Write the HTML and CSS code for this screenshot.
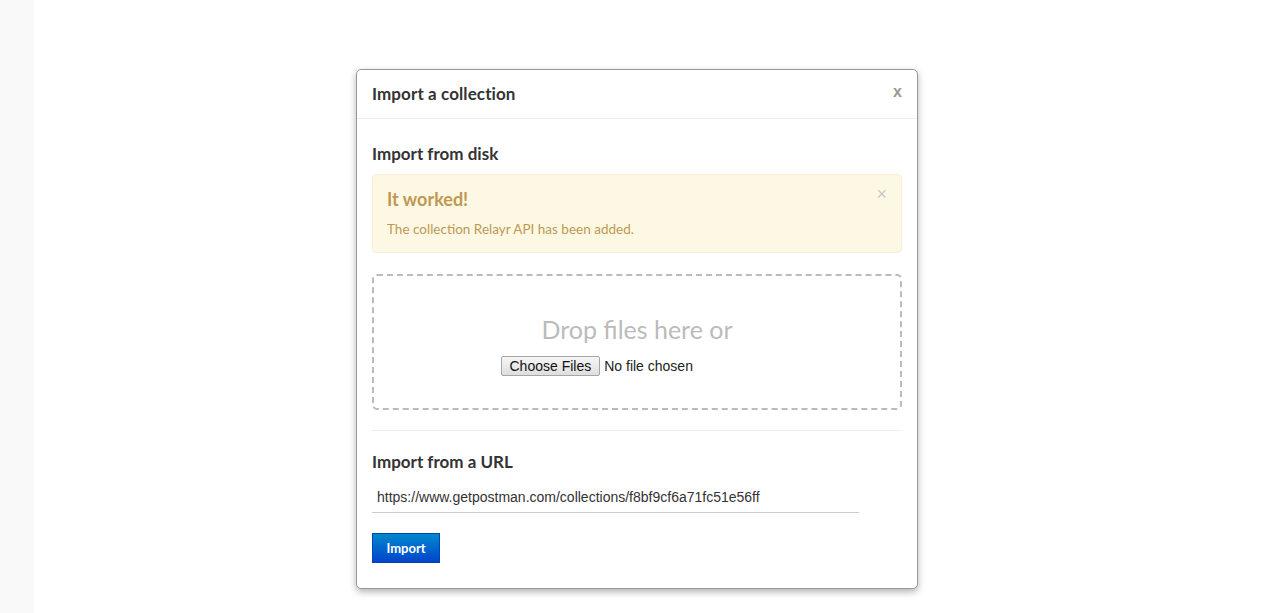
FILE: index.html
```html
<!DOCTYPE html>
<html>
<head>
<meta charset="utf-8">
<link rel="stylesheet" href="styles.css">
</head>
<body>
<div class="page">
  <aside class="sidebar"></aside>
  <main class="stage">
    <div class="modal">
      <div class="modal-header">
        <h3 class="modal-title">Import a collection</h3>
        <span class="modal-close">x</span>
      </div>
      <div class="modal-body">
        <h4 class="section-title">Import from disk</h4>
        <div class="alert">
          <span class="alert-close">×</span>
          <h4 class="alert-title">It worked!</h4>
          <p class="alert-text">The collection Relayr API has been added.</p>
        </div>
        <div class="dropzone">
          <div class="drop-text">Drop files here or</div>
          <input class="file-input" type="file" multiple>
        </div>
        <hr class="divider">
        <h4 class="section-title">Import from a URL</h4>
        <input class="url-input" type="text" value="https://www.getpostman.com/collections/f8bf9cf6a71fc51e56ff">
        <div class="actions">
          <button class="btn-import">Import</button>
        </div>
      </div>
    </div>
  </main>
</div>
</body>
</html>
```
FILE: styles.css
```css
* { box-sizing: border-box; }
html, body { margin: 0; padding: 0; height: 100%; }
body {
  background: #fff;
  font-family: "Lato", "Liberation Sans", sans-serif;
  color: #333;
}
.page { display: flex; height: 613px; overflow: hidden; }
.sidebar { width: 34px; flex: 0 0 34px; background: #f9f9f9; }
.stage { flex: 1; display: flex; justify-content: flex-start; padding: 69px 0 0 322px; }
.modal {
  width: 562px;
  height: 520px;
  background: #fff;
  border: 1px solid #999;
  border-radius: 5px;
  box-shadow: 0 3px 7px rgba(0,0,0,0.3);
}
.modal-header {
  height: 49px;
  border-bottom: 1px solid #eee;
  display: flex;
  align-items: center;
  justify-content: space-between;
  padding: 0 15px 0 15px;
}
.modal-title { margin: 0; font-size: 17px; font-weight: 700; color: #333; letter-spacing: 0.1px; margin-top: -2px; }
.modal-close { color: #999; font-size: 16px; font-weight: 700; font-family: "Liberation Sans", sans-serif; margin-top: -4px; }
.modal-body { padding: 24px 15px 0 15px; }
.section-title { margin: 0; font-size: 17px; font-weight: 700; color: #333; line-height: 22px; }
.alert {
  position: relative;
  margin-top: 9px;
  height: 79px;
  background: #fcf8e3;
  border: 1px solid #fbeed5;
  border-radius: 4px;
  padding: 13px 14px;
  color: #c09853;
}
.alert-close {
  position: absolute; right: 14px; top: 10px;
  color: #c8c8c8; font-size: 18px; line-height: 18px;
  font-family: "Liberation Sans", sans-serif;
}
.alert-title { margin: 0; font-size: 18px; font-weight: 700; line-height: 22px; color: #c09853; }
.alert-text { margin: 10px 0 0; font-size: 13.5px; line-height: 18px; }
.dropzone {
  margin-top: 21px;
  height: 136px;
  border: 2px dashed #bbb;
  border-radius: 5px;
  display: flex;
  flex-direction: column;
  align-items: center;
  justify-content: center;
  padding-top: 5px;
}
.drop-text { font-size: 25px; color: #bbb; line-height: 30px; }
.file-input {
  margin-top: 12px;
  margin-left: -8px;
  font-family: "Liberation Sans", sans-serif;
  font-size: 14px;
  color: #222;
}
.file-input::file-selector-button {
  font-family: "Liberation Sans", sans-serif;
  font-size: 14px;
  padding: 1px 8px;
  border: 1px solid #a6a6a6;
  border-radius: 2px;
  background: linear-gradient(#f6f6f6, #dedede);
  color: #111;
  margin-right: 4px;
}
.divider { border: 0; border-top: 1px solid #eee; margin: 20px 0 20px; }
.url-input {
  display: block;
  width: 487px;
  height: 30px;
  border: 0;
  border-bottom: 1px solid #ccc;
  padding: 0 5px 1px;
  font-family: "Liberation Sans", sans-serif;
  font-size: 14px;
  color: #333;
  margin-top: 10px;
  outline: none;
}
.actions { margin-top: 20px; }
.btn-import {
  width: 68px; height: 30px;
  border: 1px solid #0044b3;
  background: linear-gradient(#0088cc, #0044cc);
  color: #fff;
  font-family: "Lato", sans-serif;
  font-weight: 700;
  font-size: 13px;
  padding: 0;
}
```
